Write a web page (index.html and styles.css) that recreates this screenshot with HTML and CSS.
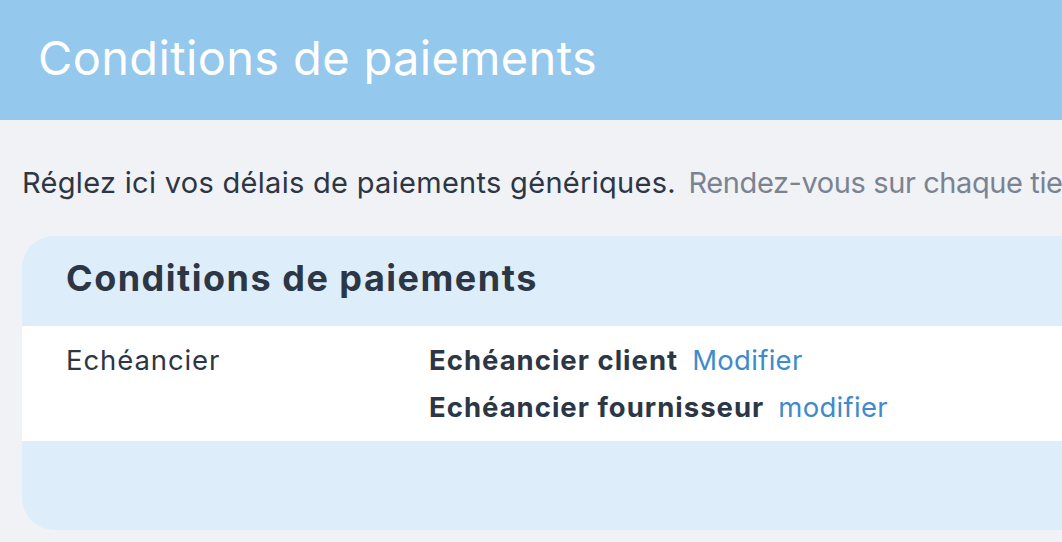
FILE: index.html
```html
<!DOCTYPE html>
<html lang="fr">
<head>
<meta charset="utf-8">
<title>Conditions de paiements</title>
<link rel="stylesheet" href="styles.css">
</head>
<body>
<header class="page-header">
  <h1 class="page-title">Conditions de paiements</h1>
</header>
<main class="page-content">
  <p class="intro">Réglez ici vos délais de paiements génériques. <span class="intro-muted">Rendez-vous sur chaque tiers pour personnaliser leurs conditions de paiements.</span></p>
  <section class="card">
    <div class="card-header">
      <h2 class="card-title">Conditions de paiements</h2>
    </div>
    <div class="card-body">
      <div class="row">
        <div class="row-label">Echéancier</div>
        <div class="row-values">
          <div class="value-line"><strong>Echéancier client</strong><a class="link" href="#">Modifier</a></div>
          <div class="value-line"><strong>Echéancier fournisseur</strong><a class="link" href="#">modifier</a></div>
        </div>
      </div>
    </div>
    <div class="card-footer"></div>
  </section>
</main>
</body>
</html>
```

FILE: styles.css
```css
html, body {
  margin: 0;
  padding: 0;
}
body {
  background: #f0f2f6;
  font-family: Inter, "Noto Sans", sans-serif;
  color: #2d3644;
  overflow: hidden;
  width: 1062px;
  height: 542px;
}
.page-header {
  background: #94c8ec;
  height: 120px;
  display: flex;
  align-items: center;
  padding-left: 38px;
  box-sizing: border-box;
}
.page-title {
  margin: 0;
  color: #ffffff;
  font-weight: 400;
  font-size: 47px;
  letter-spacing: 0.35px;
  line-height: 1;
  padding-bottom: 6px;
}
.page-content {
  padding: 0 0 0 22px;
}
.intro {
  margin: 0;
  padding-top: 46px;
  height: 70px;
  font-size: 29px;
  line-height: 34px;
  white-space: nowrap;
  color: #2d3644;
  letter-spacing: 0.3px;
}
.intro-muted {
  color: #7b8391;
  margin-left: 4px;
  letter-spacing: -0.4px;
}
.card {
  width: 1300px;
  border-radius: 32px;
  overflow: hidden;
  background: #ddeefa;
}
.card-header {
  height: 90px;
  display: flex;
  align-items: center;
  padding-left: 44px;
}
.card-title {
  margin: 0;
  font-size: 36px;
  font-weight: 700;
  letter-spacing: 1.5px;
  color: #2d3644;
  padding-bottom: 6px;
}
.card-body {
  background: #ffffff;
  padding: 11px 0 10px 44px;
}
.row {
  display: flex;
}
.row-label {
  width: 363px;
  font-size: 27.5px;
  letter-spacing: 0.9px;
  line-height: 47px;
  color: #2d3644;
}
.row-values {
  display: flex;
  flex-direction: column;
}
.value-line {
  font-size: 27.5px;
  line-height: 47px;
  display: flex;
  gap: 14px;
}
.value-line strong {
  font-weight: 700;
  letter-spacing: 1px;
  color: #2d3644;
}
.link {
  color: #3f8acb;
  letter-spacing: 0.3px;
  text-decoration: none;
}
.card-footer {
  height: 89px;
}
```
